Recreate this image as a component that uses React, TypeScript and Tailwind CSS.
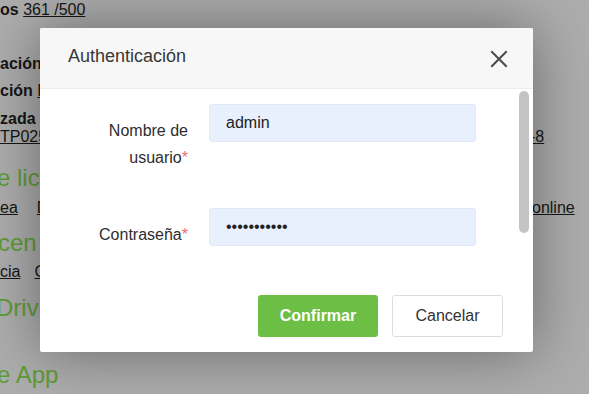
import React from "react";

const Row = ({ className = "", left, right }: { className?: string; left?: React.ReactNode; right?: React.ReactNode }) => (
  <div className={`grid grid-cols-[532px_1fr] items-center whitespace-nowrap ${className}`}>
    <div className="overflow-hidden">{left}</div>
    <div className="overflow-hidden">{right}</div>
  </div>
);

const CloseIcon = () => (
  <svg width="18" height="18" viewBox="0 0 18 18" fill="none" stroke="#4a4a4a" strokeWidth="2" strokeLinecap="square">
    <path d="M2 2L16 16M16 2L2 16" />
  </svg>
);

export default function App() {
  return (
    <div className="relative h-[394px] w-full overflow-hidden bg-[#adadad] font-['Liberation_Sans',Arial,sans-serif] text-[16px] text-[#161616]">
      {/* page behind the overlay */}
      <div className="flex flex-col">
        <Row
          className="h-[20px]"
          left={
            <span>
              <b>os</b> <span className="underline">361 /500</span>
            </span>
          }
        />
        <div className="h-[30px] pt-[15px] text-[10px] leading-none -ml-[4px]">/</div>
        <Row className="h-[27px]" left={<b>ación</b>} />
        <Row
          className="h-[28px]"
          left={
            <span>
              <b>ción</b> <span className="underline">F</span>
            </span>
          }
        />
        <div className="h-[5px]" />
        <Row className="h-[18px]" left={<b>zada</b>} />
        <Row
          className="h-[18px]"
          left={<span className="underline font-medium">TP025</span>}
          right={<span className="underline -ml-[2px]">-8</span>}
        />
        <div className="h-[17px]" />
        <Row className="h-[30px] text-[24px] text-[#5e9c37]" left={<span className="-ml-[3px] inline-block">e lic</span>} />
        <div className="h-[5px]" />
        <Row
          className="h-[20px]"
          left={
            <span className="underline">
              ea<span className="ml-[19px]">D</span>
            </span>
          }
          right={<span className="underline">online</span>}
        />
        <div className="h-[10px]" />
        <Row className="h-[30px] text-[24px] text-[#5e9c37]" left={<span className="-ml-[2px] inline-block">cen</span>} />
        <div className="h-[4px]" />
        <Row
          className="h-[20px]"
          left={
            <span className="underline">
              cia<span className="ml-[14px]">C</span>
            </span>
          }
        />
        <div className="h-[11px]" />
        <Row className="h-[30px] text-[24px] text-[#5e9c37]" left={<span className="-ml-[4px] inline-block">Drive</span>} />
        <div className="h-[37px]" />
        <Row className="h-[30px] text-[24px] text-[#5e9c37]" left={<span className="-ml-[3px] inline-block">e App</span>} />
      </div>

      {/* dialog */}
      <div className="absolute left-[40px] top-[28px] flex h-[324px] w-[493px] flex-col overflow-hidden rounded-[2px] bg-white shadow-[0_0_60px_rgba(0,0,0,0.4)]">
        <div className="flex h-[61px] shrink-0 items-center justify-between border-b border-[#ececec] bg-[#f7f7f7] pl-[28px] pr-[25px]">
          <h2 className="text-[18px] text-[#383838] -mt-[4px]">Authenticación</h2>
          <button className="mt-[1px]">
            <CloseIcon />
          </button>
        </div>

        <div className="flex min-h-0 flex-1">
          <div className="flex flex-1 flex-col pt-[15px] pr-[16px]">
            <div className="flex items-start">
              <label className="w-[148px] pt-[13px] text-right leading-[27px] text-[#2e2e2e]">
                Nombre de
                <br />
                usuario<span className="text-[#f56c6c]">*</span>
              </label>
              <input
                className="ml-[21px] h-[38px] w-[267px] rounded-[3px] border border-[#e1e8f3] bg-[#e8f0fe] pl-[16px] text-[16px] text-[#222] outline-none"
                value="admin"
                readOnly
              />
            </div>
            <div className="mt-[37px] flex items-start">
              <label className="w-[148px] pt-[13px] text-right leading-[27px] text-[#2e2e2e]">
                Contraseña<span className="text-[#f56c6c]">*</span>
              </label>
              <input
                type="password"
                className="ml-[21px] h-[38px] w-[267px] rounded-[3px] border border-[#e1e8f3] bg-[#e8f0fe] pl-[16px] text-[16px] text-[#222] outline-none"
                value="12345678901"
                readOnly
              />
            </div>
            <div className="mt-[47px] flex justify-end gap-[14px]">
              <button className="h-[42px] w-[120px] rounded-[3px] bg-[#6dbe45] font-bold text-white">Confirmar</button>
              <button className="h-[42px] w-[111px] rounded-[3px] border border-[#dcdcdc] bg-white text-[#333]">Cancelar</button>
            </div>
          </div>
          <div className="w-[14px] shrink-0 pt-[2px]">
            <div className="h-[142px] w-[10px] rounded-full bg-[#c4c4c4]" />
          </div>
        </div>
      </div>
    </div>
  );
}
